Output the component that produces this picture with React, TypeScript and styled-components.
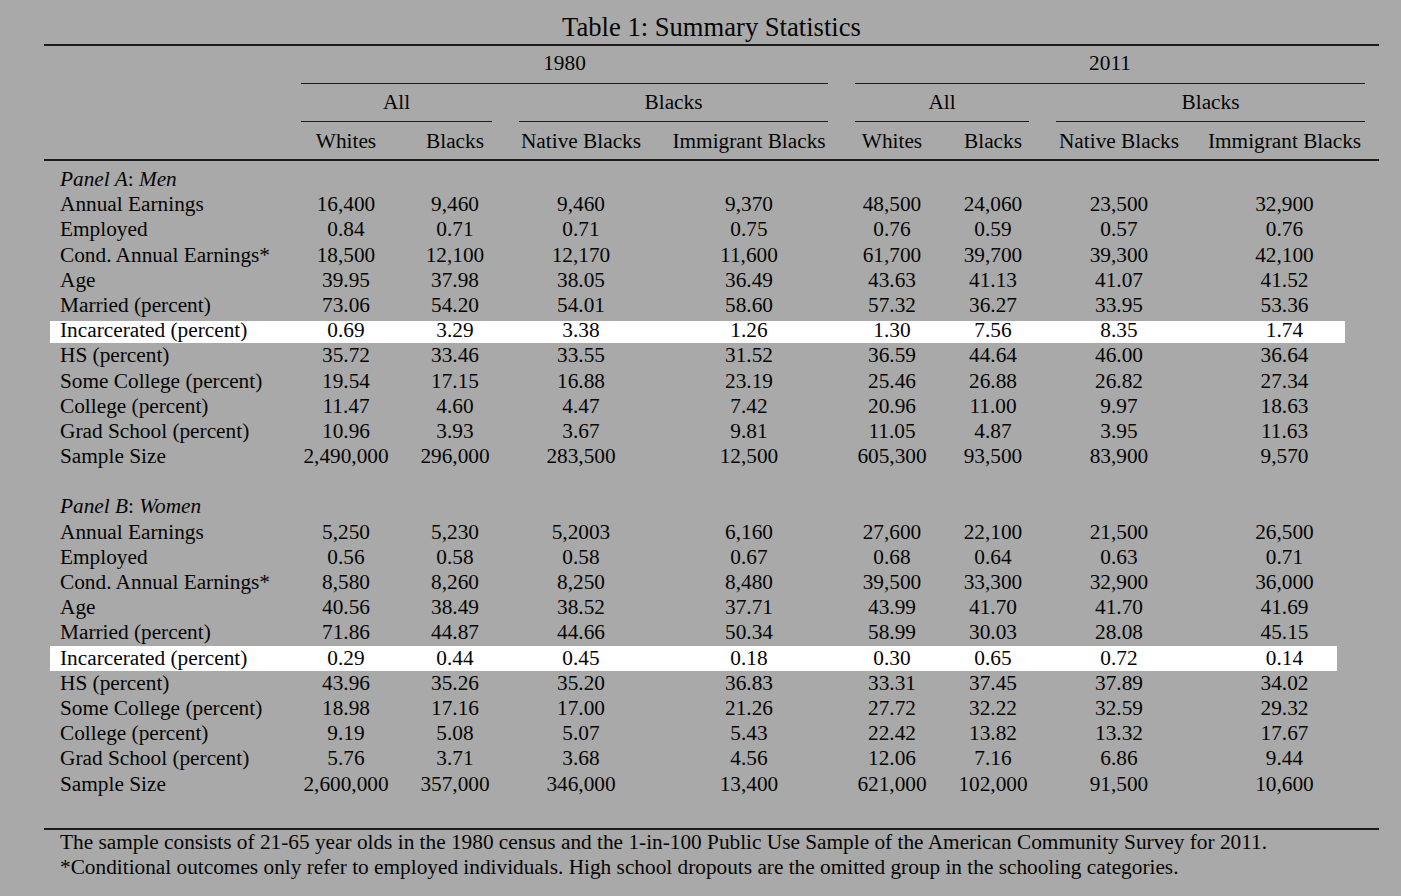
import styled, { createGlobalStyle, css } from 'styled-components';

const COLS = '248px 108px 110px 142px 194px 92px 110px 142px 189px';
const INK = '#050505';
const RULE = '#1c1c1c';

const GlobalStyle = createGlobalStyle`
  html, body {
    margin: 0;
    padding: 0;
    background: #a9a9a9;
  }

  body {
    font-family: "Liberation Serif", "Times New Roman", serif;
    color: ${INK};
  }
`;

const Page = styled.div`
  width: 1335px;
  padding-left: 44px;
`;

const Title = styled.h1`
  margin: 0 0 2px;
  padding-top: 12px;
  height: 30px;
  line-height: 30px;
  font-size: 26.6px;
  font-weight: normal;
  text-align: center;
`;

const Rule = styled.div`
  height: 2px;
  background: ${RULE};
`;

const HeadRow = styled.div`
  display: grid;
  grid-template-columns: ${COLS};
  font-size: 21.3px;
  line-height: 26px;
`;

type SpanProps = {
  $from: number;
  $to: number;
  $l: number;
  $r: number;
  $pt: number;
  $pb: number;
};

const SpanHead = styled.div<SpanProps>`
  grid-column: ${(p) => p.$from} / ${(p) => p.$to};
  margin: 0 ${(p) => p.$r}px 0 ${(p) => p.$l}px;
  padding: ${(p) => p.$pt}px 0 ${(p) => p.$pb}px;
  border-bottom: 1px solid ${RULE};
  text-align: center;
`;

const ColHead = styled.div`
  padding: 6px 0 5px;
  text-align: center;
  white-space: nowrap;

  &:first-child {
    grid-column: 2;
  }
`;

const Body = styled.div`
  padding: 6px 0 31px;
`;

type RowProps = {
  $hl?: boolean;
  $hlTop?: number;
  $hlRight?: number;
};

const Row = styled.div<RowProps>`
  position: relative;
  isolation: isolate;
  display: grid;
  grid-template-columns: ${COLS};
  height: 25.2px;
  line-height: 25.2px;
  font-size: 21.3px;

  ${(p) =>
    p.$hl &&
    css`
      &::before {
        content: '';
        position: absolute;
        left: 6px;
        right: ${p.$hlRight ?? 34}px;
        top: ${p.$hlTop ?? 0}px;
        bottom: 0;
        background: #fff;
        z-index: -1;
      }
    `}
`;

const Label = styled.div`
  padding-left: 16px;
  white-space: nowrap;
`;

const PanelTitle = styled.div`
  grid-column: 1 / -1;
  padding-left: 16px;

  em {
    font-style: italic;
  }
`;

const Num = styled.div`
  text-align: center;
  white-space: nowrap;
`;

const Notes = styled.div`
  padding-left: 16px;
  font-size: 21.3px;
  line-height: 25px;
  white-space: nowrap;
`;

type DataRow = [string, string[]];

const MEN: DataRow[] = [
  ['Annual Earnings', ['16,400', '9,460', '9,460', '9,370', '48,500', '24,060', '23,500', '32,900']],
  ['Employed', ['0.84', '0.71', '0.71', '0.75', '0.76', '0.59', '0.57', '0.76']],
  ['Cond. Annual Earnings*', ['18,500', '12,100', '12,170', '11,600', '61,700', '39,700', '39,300', '42,100']],
  ['Age', ['39.95', '37.98', '38.05', '36.49', '43.63', '41.13', '41.07', '41.52']],
  ['Married (percent)', ['73.06', '54.20', '54.01', '58.60', '57.32', '36.27', '33.95', '53.36']],
  ['Incarcerated (percent)', ['0.69', '3.29', '3.38', '1.26', '1.30', '7.56', '8.35', '1.74']],
  ['HS (percent)', ['35.72', '33.46', '33.55', '31.52', '36.59', '44.64', '46.00', '36.64']],
  ['Some College (percent)', ['19.54', '17.15', '16.88', '23.19', '25.46', '26.88', '26.82', '27.34']],
  ['College (percent)', ['11.47', '4.60', '4.47', '7.42', '20.96', '11.00', '9.97', '18.63']],
  ['Grad School (percent)', ['10.96', '3.93', '3.67', '9.81', '11.05', '4.87', '3.95', '11.63']],
  ['Sample Size', ['2,490,000', '296,000', '283,500', '12,500', '605,300', '93,500', '83,900', '9,570']],
];

const WOMEN: DataRow[] = [
  ['Annual Earnings', ['5,250', '5,230', '5,2003', '6,160', '27,600', '22,100', '21,500', '26,500']],
  ['Employed', ['0.56', '0.58', '0.58', '0.67', '0.68', '0.64', '0.63', '0.71']],
  ['Cond. Annual Earnings*', ['8,580', '8,260', '8,250', '8,480', '39,500', '33,300', '32,900', '36,000']],
  ['Age', ['40.56', '38.49', '38.52', '37.71', '43.99', '41.70', '41.70', '41.69']],
  ['Married (percent)', ['71.86', '44.87', '44.66', '50.34', '58.99', '30.03', '28.08', '45.15']],
  ['Incarcerated (percent)', ['0.29', '0.44', '0.45', '0.18', '0.30', '0.65', '0.72', '0.14']],
  ['HS (percent)', ['43.96', '35.26', '35.20', '36.83', '33.31', '37.45', '37.89', '34.02']],
  ['Some College (percent)', ['18.98', '17.16', '17.00', '21.26', '27.72', '32.22', '32.59', '29.32']],
  ['College (percent)', ['9.19', '5.08', '5.07', '5.43', '22.42', '13.82', '13.32', '17.67']],
  ['Grad School (percent)', ['5.76', '3.71', '3.68', '4.56', '12.06', '7.16', '6.86', '9.44']],
  ['Sample Size', ['2,600,000', '357,000', '346,000', '13,400', '621,000', '102,000', '91,500', '10,600']],
];

const SUBHEADS = ['Whites', 'Blacks', 'Native Blacks', 'Immigrant Blacks', 'Whites', 'Blacks', 'Native Blacks', 'Immigrant Blacks'];

const Panel = ({
  letter,
  group,
  rows,
  hlTop,
  hlRight,
}: {
  letter: string;
  group: string;
  rows: DataRow[];
  hlTop: number;
  hlRight: number;
}) => (
  <>
    <Row>
      <PanelTitle>
        <em>Panel {letter}</em>: <em>{group}</em>
      </PanelTitle>
    </Row>
    {rows.map(([label, values]) => {
      const hl = label.startsWith('Incarcerated');
      return (
        <Row key={label} $hl={hl} $hlTop={hlTop} $hlRight={hlRight}>
          <Label>{label}</Label>
          {values.map((v, i) => (
            <Num key={i}>{v}</Num>
          ))}
        </Row>
      );
    })}
  </>
);

export default function App() {
  return (
    <>
      <GlobalStyle />
      <Page>
        <Title>Table 1: Summary Statistics</Title>
        <Rule />

        <HeadRow>
          <SpanHead $from={2} $to={6} $l={9} $r={18} $pt={4} $pb={7}>1980</SpanHead>
          <SpanHead $from={6} $to={10} $l={9} $r={14} $pt={4} $pb={7}>2011</SpanHead>
        </HeadRow>
        <HeadRow>
          <SpanHead $from={2} $to={4} $l={9} $r={18} $pt={5} $pb={6}>All</SpanHead>
          <SpanHead $from={4} $to={6} $l={9} $r={18} $pt={5} $pb={6}>Blacks</SpanHead>
          <SpanHead $from={6} $to={8} $l={9} $r={19} $pt={5} $pb={6}>All</SpanHead>
          <SpanHead $from={8} $to={10} $l={8} $r={14} $pt={5} $pb={6}>Blacks</SpanHead>
        </HeadRow>
        <HeadRow>
          {SUBHEADS.map((h, i) => (
            <ColHead key={i}>{h}</ColHead>
          ))}
        </HeadRow>
        <Rule />

        <Body>
          <Panel letter="A" group="Men" rows={MEN} hlTop={3} hlRight={34} />
          <Row />
          <Panel letter="B" group="Women" rows={WOMEN} hlTop={0} hlRight={42} />
        </Body>

        <Rule />
        <Notes>
          The sample consists of 21-65 year olds in the 1980 census and the 1-in-100 Public Use Sample of the American
          Community Survey for 2011.
          <br />
          *Conditional outcomes only refer to employed individuals. High school dropouts are the omitted group in the
          schooling categories.
        </Notes>
      </Page>
    </>
  );
}
